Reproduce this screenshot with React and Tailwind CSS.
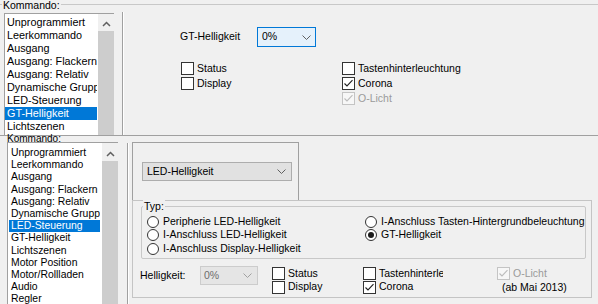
import React from "react";

const Chevron = ({ color = "#606060" }) => (
  <svg width="9" height="5" viewBox="0 0 9 5">
    <path d="M0.5 0.5 L4.5 4.5 L8.5 0.5" fill="none" stroke={color} strokeWidth="1" />
  </svg>
);

const UpChevron = () => (
  <svg width="9" height="6" viewBox="0 0 9 6">
    <path d="M1 5 L4.5 1.5 L8 5" fill="none" stroke="#606060" strokeWidth="1.5" />
  </svg>
);

function Box({ checked, disabled }) {
  return (
    <span
      className={
        disabled
          ? "w-[13px] h-[13px] border border-[#c4c4c4] bg-[#f7f7f7] flex items-center justify-center shrink-0"
          : "w-[13px] h-[13px] border border-[#333333] bg-white flex items-center justify-center shrink-0"
      }
    >
      {checked && (
        <svg width="11" height="11" viewBox="0 0 11 11">
          <path
            d="M1.5 5.5 L4 8 L9.5 2.2"
            fill="none"
            stroke={disabled ? "#bcbcbc" : "#202020"}
            strokeWidth="1.1"
          />
        </svg>
      )}
    </span>
  );
}

function CheckRow({ label, checked, disabled, h = "h-[15px]" }) {
  return (
    <div className={"flex items-center gap-[3px] whitespace-nowrap " + h}>
      <Box checked={checked} disabled={disabled} />
      <span className={disabled ? "text-[#9a9a9a]" : ""}>{label}</span>
    </div>
  );
}

function Radio({ label, checked }) {
  return (
    <div className="h-[13.5px] flex items-center gap-[4px] whitespace-nowrap">
      <span className="w-[12px] h-[12px] rounded-full border border-[#333333] bg-white flex items-center justify-center shrink-0">
        {checked && <span className="w-[6px] h-[6px] rounded-full bg-[#1a1a1a]" />}
      </span>
      <span>{label}</span>
    </div>
  );
}

const topItems = [
  "Unprogrammiert",
  "Leerkommando",
  "Ausgang",
  "Ausgang: Flackern",
  "Ausgang: Relativ",
  "Dynamische Gruppen",
  "LED-Steuerung",
  "GT-Helligkeit",
  "Lichtszenen",
];

const bottomItems = [
  "Unprogrammiert",
  "Leerkommando",
  "Ausgang",
  "Ausgang: Flackern",
  "Ausgang: Relativ",
  "Dynamische Gruppen",
  "LED-Steuerung",
  "GT-Helligkeit",
  "Lichtszenen",
  "Motor Position",
  "Motor/Rollladen",
  "Audio",
  "Regler",
];

export default function App() {
  return (
    <div className="w-[598px] h-[304px] bg-[#f0f0f0] overflow-hidden font-['Liberation_Sans',Arial,sans-serif] text-black text-[10.5px]">
      {/* TOP */}
      <div className="h-[135px] flex flex-col overflow-hidden">
        <div className="h-[12px] -mt-[1px] flex items-start shrink-0">
          <div className="w-[2px] h-px bg-[#c8c8c8] mt-[5px]" />
          <span className="leading-[12px] px-px">Kommando:</span>
          <div className="flex-1 h-px bg-[#c8c8c8] mt-[5px]" />
        </div>
        <div className="flex flex-1 mt-[2px] min-h-0">
          <div className="ml-[4px] w-[110px] bg-white border-l border-t border-[#a0a0a0] flex">
            <div className="flex-1 pt-[2px] overflow-hidden text-[10.8px]">
              {topItems.map((t) => (
                <div
                  key={t}
                  className={
                    t === "GT-Helligkeit"
                      ? "h-[13px] leading-[13px] pl-[2px] mr-[1px] overflow-hidden whitespace-nowrap bg-[#0078d7] text-white"
                      : "h-[13px] leading-[13px] pl-[2px] mr-[1px] overflow-hidden whitespace-nowrap"
                  }
                >
                  {t}
                </div>
              ))}
            </div>
            <div className="w-[16px] bg-[#f0f0f0] flex flex-col">
              <div className="h-[17px] flex items-center justify-center pt-[2px]">
                <UpChevron />
              </div>
              <div className="flex-1 bg-[#cdcdcd]" />
            </div>
          </div>
          <div className="ml-[8px] -mt-[1px] w-[2px] border-l border-[#a0a0a0] bg-white" />
          <div className="flex-1 pt-[14px] pl-[56px]">
            <div className="flex items-center h-[20px]">
              <span className="w-[77px]">GT-Helligkeit</span>
              <div className="w-[59px] h-[20px] border border-[#0078d7] bg-[#e5f1fb] flex items-center justify-between pl-[4px] pr-[4px]">
                <span>0%</span>
                <Chevron />
              </div>
            </div>
            <div className="flex mt-[14px] ml-[1px]">
              <div className="w-[161px] flex flex-col">
                <CheckRow label="Status" />
                <CheckRow label="Display" />
              </div>
              <div className="flex flex-col">
                <CheckRow label="Tastenhinterleuchtung" />
                <CheckRow label="Corona" checked />
                <CheckRow label="O-Licht" checked disabled />
              </div>
            </div>
          </div>
        </div>
      </div>

      {/* BOTTOM */}
      <div className="h-[169px] border-t border-[#a0a0a0] flex flex-col">
        <div className="h-[6px] leading-[6px] pl-[7px] text-[10px] shrink-0">Kommando:</div>
        <div className="flex flex-1 min-h-0">
          <div className="ml-[7px] w-[111px] bg-white border-l border-t border-[#a0a0a0] flex">
            <div className="flex-1 pt-[4px] overflow-hidden text-[10.4px]">
              {bottomItems.map((t) => (
                <div
                  key={t}
                  className={
                    t === "LED-Steuerung"
                      ? "h-[12.2px] leading-[12.2px] pl-[2px] ml-[1px] mr-[2px] overflow-hidden whitespace-nowrap bg-[#0078d7] text-white"
                      : "h-[12.2px] leading-[12.2px] pl-[2px] ml-[1px] mr-[2px] overflow-hidden whitespace-nowrap"
                  }
                >
                  {t}
                </div>
              ))}
            </div>
            <div className="w-[16px] bg-[#f0f0f0] flex flex-col">
              <div className="h-[18px] flex items-center justify-center pt-[4px]">
                <UpChevron />
              </div>
              <div className="flex-1 bg-[#cdcdcd]" />
            </div>
          </div>
          <div className="ml-[9px] mt-[1px] w-[2px] border-l border-[#a0a0a0] bg-white" />
          <div className="flex-1 flex flex-col pl-[3px]">
            <div className="w-[167px] h-[58px] border-l border-t border-r border-[#a0a0a0] pl-[9px] pt-[19px] shrink-0">
              <div className="w-[150px] h-[19px] bg-[#e1e1e1] border border-[#adadad] flex items-center justify-between pl-[4px] pr-[5px]">
                <span>LED-Helligkeit</span>
                <Chevron />
              </div>
            </div>
            <div className="w-[460px] h-[98px] border border-[#c4c4c4] flex flex-col shrink-0">
              <div className="relative mt-[5px] ml-[8px] mr-[5px] h-[53px] border border-[#c8c8c8] rounded-[2px]">
                <span className="absolute left-[1px] -top-[7px] leading-[12px] px-px bg-[#f0f0f0]">Typ:</span>
                <div className="h-full overflow-hidden flex pt-[8px] pl-[5px]">
                  <div className="w-[218px] flex flex-col shrink-0">
                    <Radio label="Peripherie LED-Helligkeit" />
                    <Radio label="I-Anschluss LED-Helligkeit" />
                    <Radio label="I-Anschluss Display-Helligkeit" />
                  </div>
                  <div className="flex flex-col">
                    <Radio label="I-Anschluss Tasten-Hintergrundbeleuchtung" />
                    <Radio label="GT-Helligkeit" checked />
                  </div>
                </div>
              </div>
              <div className="flex items-start mt-[8px] pl-[7px]">
                <span className="w-[60px] h-[19px] leading-[19px] -mt-[1px]">Helligkeit:</span>
                <div className="w-[58px] h-[19px] -mt-[1px] bg-[#e5e5e5] border border-[#cccccc] flex items-center justify-between pl-[3px] pr-[5px] text-[#6d6d6d]">
                  <span>0%</span>
                  <Chevron color="#a0a0a0" />
                </div>
                <div className="ml-[14px] w-[91px] flex flex-col">
                  <CheckRow label="Status" h="h-[13.5px]" />
                  <CheckRow label="Display" h="h-[13.5px]" />
                </div>
                <div className="w-[80px] overflow-hidden flex flex-col">
                  <CheckRow label="Tastenhinterleuchtung" h="h-[13.5px]" />
                  <CheckRow label="Corona" checked h="h-[13.5px]" />
                </div>
                <div className="ml-[54px] flex flex-col">
                  <CheckRow label="O-Licht" checked disabled h="h-[13.5px]" />
                  <div className="h-[13.5px] leading-[13.5px] ml-[5px] whitespace-nowrap">(ab Mai 2013)</div>
                </div>
              </div>
            </div>
          </div>
        </div>
      </div>
    </div>
  );
}
